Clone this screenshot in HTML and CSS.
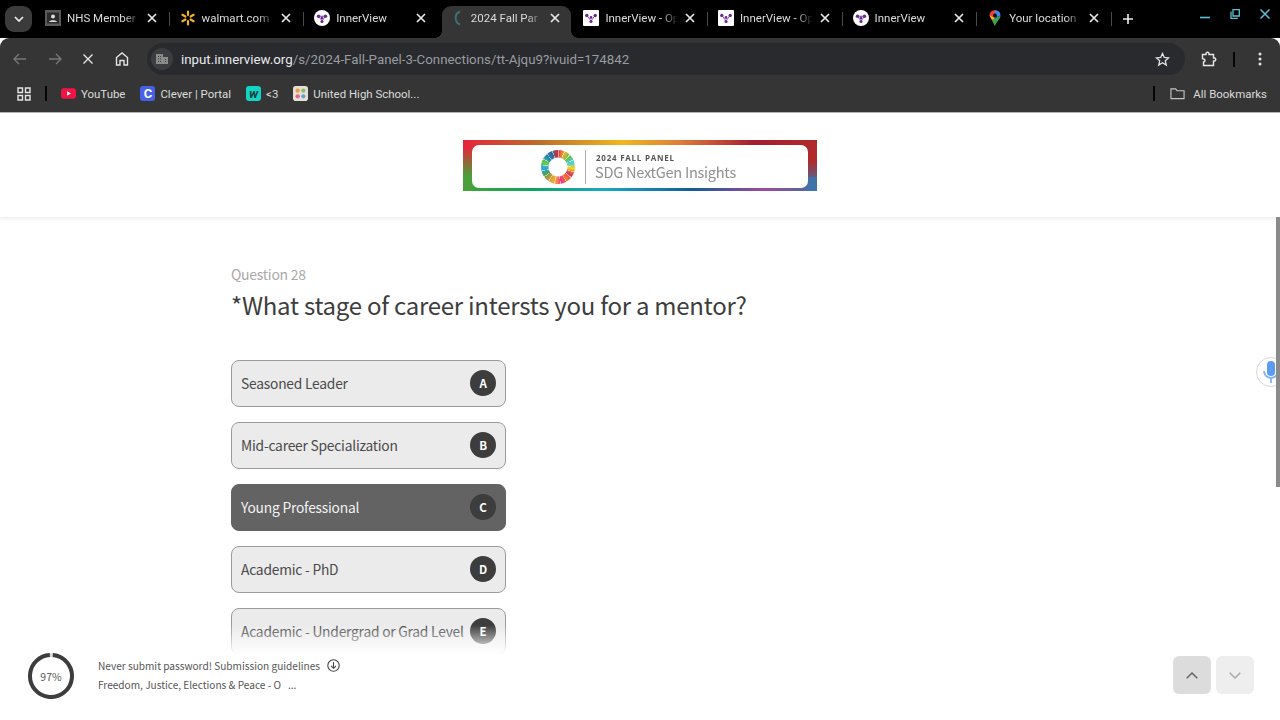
FILE: index.html
```html
<!DOCTYPE html>
<html lang="en">
<head>
<meta charset="utf-8">
<title>2024 Fall Panel</title>
<link rel="stylesheet" href="styles.css">
</head>
<body>
<svg class="defs" width="0" height="0" aria-hidden="true">
  <symbol id="x" viewBox="0 0 10 10"><path d="M1 1l8 8M9 1l-8 8" stroke="#e8e8e8" stroke-width="1.7" fill="none"/></symbol>
  <symbol id="iv-round" viewBox="0 0 16 16"><circle cx="8" cy="8" r="8" fill="#fff"/><path d="M4.5 6.2L8 11M11.500 6.200L8 11M4.500 6.200h7" stroke="#6b2c91" stroke-width=".8" fill="none"/><circle cx="4.500" cy="6.200" r="1.700" fill="#6b2c91"/><circle cx="11.500" cy="6.200" r="1.700" fill="#6b2c91"/><circle cx="8" cy="8" r="1.400" fill="#6b2c91"/><circle cx="8" cy="11.500" r="1.600" fill="#6b2c91"/></symbol>
  <symbol id="iv-square" viewBox="0 0 16 16"><rect width="16" height="16" rx="1" fill="#fff"/><path d="M4.500 6.200L8 11M11.500 6.200L8 11" stroke="#6b2c91" stroke-width=".8" fill="none"/><circle cx="3.800" cy="5.500" r="1.700" fill="#6b2c91"/><circle cx="12.200" cy="5.500" r="1.700" fill="#6b2c91"/><circle cx="8" cy="7.500" r="1.400" fill="#6b2c91"/><circle cx="8" cy="11.500" r="1.600" fill="#6b2c91"/></symbol>
</svg>
<div class="window">
  <div class="tabstrip">
    <button class="group-btn"><svg width="10" height="6" viewBox="0 0 10 6"><path d="M1 1l4 4 4-4" stroke="#eee" stroke-width="1.700" fill="none"/></svg></button>
    <div class="tab sep">
      <svg class="fav" viewBox="0 0 16 16"><rect width="16" height="16" fill="#5a5a5a"/><rect x="2" y="2.500" width="12" height="11" fill="#2c2c2c"/><circle cx="8" cy="6.500" r="2" fill="#ddd"/><path d="M4 12c.5-2.500 7.500-2.500 8 0z" fill="#ddd"/></svg>
      <span class="tab-title">NHS Member</span>
      <svg class="close"><use href="#x"/></svg>
    </div>
    <div class="tab sep">
      <svg class="fav" viewBox="0 0 16 16"><g stroke="#f5b324" stroke-width="2.200" stroke-linecap="round"><path d="M8 1.500v3.500M8 11v3.500M2.400 4.800l3 1.700M10.600 9.500l3 1.700M2.400 11.200l3-1.700M10.600 6.500l3-1.700"/></g></svg>
      <span class="tab-title">walmart.com</span>
      <svg class="close"><use href="#x"/></svg>
    </div>
    <div class="tab">
      <svg class="fav"><use href="#iv-round"/></svg>
      <span class="tab-title">InnerView</span>
      <svg class="close"><use href="#x"/></svg>
    </div>
    <div class="tab active">
      <svg class="fav spinner" viewBox="0 0 16 16"><path d="M11 1.500A7 7 0 0 0 11 14.500" stroke="#3f6f78" stroke-width="2" fill="none"/></svg>
      <span class="tab-title">2024 Fall Par</span>
      <svg class="close"><use href="#x"/></svg>
    </div>
    <div class="tab sep">
      <svg class="fav"><use href="#iv-square"/></svg>
      <span class="tab-title">InnerView - Op</span>
      <svg class="close"><use href="#x"/></svg>
    </div>
    <div class="tab sep">
      <svg class="fav"><use href="#iv-square"/></svg>
      <span class="tab-title">InnerView - Op</span>
      <svg class="close"><use href="#x"/></svg>
    </div>
    <div class="tab sep">
      <svg class="fav"><use href="#iv-round"/></svg>
      <span class="tab-title">InnerView</span>
      <svg class="close"><use href="#x"/></svg>
    </div>
    <div class="tab sep">
      <svg class="fav" viewBox="0 0 16 16"><path d="M8 0a5.500 5.500 0 0 0-5.500 5.500L5 10l3 6z" fill="#ea4335"/><path d="M8 0a5.500 5.500 0 0 1 5.500 5.500L8 8z" fill="#4285f4"/><path d="M2.500 5.500L8 8l-3 2z" fill="#fbbc04"/><path d="M13.500 5.500C13.500 9 9.500 11 8 16l-3-6z" fill="#34a853"/><circle cx="8" cy="5.500" r="2" fill="#111"/></svg>
      <span class="tab-title">Your location</span>
      <svg class="close"><use href="#x"/></svg>
    </div>
    <svg class="plus" width="10" height="10" viewBox="0 0 10 10"><path d="M5 0v10M0 5h10" stroke="#eee" stroke-width="1.600"/></svg>
    <div class="winctl">
      <svg width="10" height="10" viewBox="0 0 10 10"><path d="M0 8.500h10" stroke="#5fc0d4" stroke-width="1.600"/></svg>
      <svg width="10" height="10" viewBox="0 0 10 10"><path d="M3 0.700h6.300v6.300H3zM1 2.500v6.800h6.800" stroke="#5fc0d4" stroke-width="1.300" fill="none"/></svg>
      <svg width="10" height="10" viewBox="0 0 10 10"><path d="M.5.500l9 9M9.500.500l-9 9" stroke="#5fc0d4" stroke-width="1.500"/></svg>
    </div>
  </div>

  <div class="toolbar">
    <div class="nav">
      <svg width="14" height="12" viewBox="0 0 14 12"><path d="M13 6H1.500M6 1L1 6l5 5" stroke="#757779" stroke-width="1.400" fill="none"/></svg>
      <svg width="14" height="12" viewBox="0 0 14 12"><path d="M1 6h11.500M8 1l5 5-5 5" stroke="#757779" stroke-width="1.400" fill="none"/></svg>
      <svg width="12" height="12" viewBox="0 0 12 12"><path d="M1.500 1.500l9 9M10.500 1.500l-9 9" stroke="#e4e4e4" stroke-width="1.400"/></svg>
      <svg width="14" height="14" viewBox="0 0 14 14"><path d="M1.500 13V5.500L7 1l5.500 4.500V13H9V8.500H5V13z" stroke="#e4e4e4" stroke-width="1.400" fill="none"/></svg>
    </div>
    <div class="omnibox">
      <span class="site-chip"><svg width="12" height="12" viewBox="0 0 12 12"><path d="M0 1h7v10H0zM7 4h5v7H7z" fill="#8a8a8a"/><path d="M2 3h1v1H2zM4 3h1v1H4zM2 5.500h1v1H2zM4 5.500h1v1H4zM2 8h1v1H2zM4 8h1v1H4zM9 6h1v1H9zM9 8h1v1H9z" fill="#3c3d3f"/></svg></span>
      <span class="url"><span class="host">input.innerview.org</span>/s/2024-Fall-Panel-3-Connections/tt-Ajqu9?ivuid=174842</span>
      <svg class="star" width="15" height="15" viewBox="0 0 15 15"><path d="M7.500 1.500l1.800 4 4.300.4-3.300 2.900 1 4.300-3.800-2.300-3.800 2.300 1-4.300L1.400 5.900l4.300-.4z" stroke="#e4e4e4" stroke-width="1.300" fill="none"/></svg>
    </div>
    <div class="actions">
      <svg width="16" height="16" viewBox="0 0 16 16"><path d="M1.500 3.500H5V2.800a1.500 1.500 0 0 1 3 0v.7h4.500V7h.8a1.500 1.500 0 0 1 0 3h-.8v4.500H2.500V11a1.500 1.500 0 0 0 0-3 0 0 0 0 1-1-.2z" stroke="#e8e8e8" stroke-width="1.400" fill="none"/></svg>
      <i class="vsep"></i>
      <svg width="4" height="14" viewBox="0 0 4 14"><g fill="#e4e4e4"><circle cx="2" cy="2" r="1.500"/><circle cx="2" cy="7" r="1.500"/><circle cx="2" cy="12" r="1.500"/></g></svg>
    </div>
  </div>

  <div class="bookmarks">
    <svg class="apps" width="14" height="14" viewBox="0 0 14 14"><path d="M1 1h4.500v4.500H1zM8.500 1H13v4.500H8.500zM1 8.500h4.500V13H1zM8.500 8.500H13V13H8.500z" stroke="#e4e4e4" stroke-width="1.400" fill="none"/></svg>
    <i class="vsep"></i>
    <a class="bm bm-yt"><svg class="fav" viewBox="0 0 16 16"><rect y="2.500" width="16" height="11" rx="3" fill="#f01446"/><path d="M6.500 5.500l4 2.500-4 2.500z" fill="#fff"/></svg>YouTube</a>
    <a class="bm bm-clever"><span class="fav-letter clever">C</span>Clever | Portal</a>
    <a class="bm bm-w"><span class="fav-letter watt">w</span>&lt;3</a>
    <a class="bm"><svg class="fav" viewBox="0 0 16 16"><rect width="16" height="16" rx="3" fill="#e6dfd6"/><circle cx="5" cy="5" r="2.300" fill="#e5a13c"/><circle cx="11" cy="5" r="2.300" fill="#8dbb6a"/><circle cx="5" cy="11" r="2.300" fill="#d66a8a"/><circle cx="11" cy="11" r="2.300" fill="#6a9fd6"/></svg>United High School...</a>
    <i class="vsep end"></i>
    <a class="bm all"><svg class="fav" viewBox="0 0 16 16"><path d="M1 3h5l1.500 2H15v8.500H1z" stroke="#c4c4c4" stroke-width="1.200" fill="none"/></svg>All Bookmarks</a>
  </div>

  <div class="page">
    <header class="page-header">
      <div class="banner">
        <div class="banner-inner">
          <span class="sdg-ring"></span>
          <span class="banner-rule"></span>
          <div class="banner-text">
            <span class="banner-kicker">2024 FALL PANEL</span>
            <span class="banner-name">SDG NextGen Insights</span>
          </div>
        </div>
      </div>
    </header>
    <main class="survey">
      <p class="q-num">Question 28</p>
      <h1 class="q-title">*What stage of career intersts you for a mentor?</h1>
      <ul class="answers">
        <li class="answer"><span>Seasoned Leader</span><b class="key">A</b></li>
        <li class="answer"><span>Mid-career Specialization</span><b class="key">B</b></li>
        <li class="answer selected"><span>Young Professional</span><b class="key">C</b></li>
        <li class="answer"><span>Academic - PhD</span><b class="key">D</b></li>
        <li class="answer"><span>Academic - Undergrad or Grad Level</span><b class="key">E</b></li>
      </ul>
    </main>
    <div class="scrollbar"></div>
    <div class="mic">
      <svg width="16" height="24" viewBox="0 0 16 24"><rect x="4" y="1" width="8" height="15" rx="4" fill="#5b9cf0"/><path d="M1 11a7 7 0 0 0 14 0M8 18v5" stroke="#7fb2f3" stroke-width="1.800" fill="none"/></svg>
    </div>
    <footer class="page-footer">
      <div class="progress">
        <svg width="46" height="46" viewBox="0 0 46 46"><circle cx="23" cy="23" r="21" fill="none" stroke="#d9d9d9" stroke-width="4"/><circle cx="23" cy="23" r="21" fill="none" stroke="#3d3d3d" stroke-width="4" stroke-dasharray="128 132" transform="rotate(-85 23 23)"/></svg>
        <span class="pct">97%</span>
      </div>
      <div class="foot-text">
        <p class="foot-line">Never submit password! Submission guidelines
          <svg class="dl" width="13" height="13" viewBox="0 0 13 13"><circle cx="6.500" cy="6.500" r="5.700" stroke="#444" stroke-width="1.100" fill="none"/><path d="M6.500 3v6M4 6.800l2.500 2.500L9 6.800" stroke="#444" stroke-width="1.100" fill="none"/></svg>
        </p>
        <p class="foot-line">Freedom, Justice, Elections &amp; Peace - O <span class="dots">...</span></p>
      </div>
      <div class="pager">
        <button class="pg up"><svg width="12" height="7" viewBox="0 0 12 7"><path d="M.7 6.300L6 1l5.300 5.300" stroke="#666" stroke-width="1.500" fill="none"/></svg></button>
        <button class="pg down"><svg width="12" height="7" viewBox="0 0 12 7"><path d="M.7.700L6 6 11.300.700" stroke="#aaa" stroke-width="1.500" fill="none"/></svg></button>
      </div>
    </footer>
  </div>
</div>
</body>
</html>
```
FILE: styles.css
```css
* { box-sizing: border-box; }
html, body { margin: 0; height: 100%; overflow: hidden; background: #fff; }
p, h1, ul { margin: 0; padding: 0; }
button { border: 0; padding: 0; }
.defs { position: absolute; }
.window { display: flex; flex-direction: column; width: 1280px; height: 720px; font-family: Roboto, sans-serif; }

/* tab strip */
.tabstrip { display: flex; align-items: flex-end; height: 38px; background: #000; padding-left: 5px; flex: none; position: relative; z-index: 1; }
.group-btn { display: flex; align-items: center; justify-content: center; width: 27px; height: 26px; margin: 0 3px 6px 0; border-radius: 9px; background: #3b3b3b; }
.tab { position: relative; display: flex; align-items: center; width: 134.6px; height: 38px; padding: 0 13px 2px 10px; color: #dcdcdc; font-size: 11.500px; flex: none; }
.fav { width: 16px; height: 16px; flex: none; }
.tab .fav { margin-right: 6px; position: relative; z-index: 1; }
.tab-title { flex: 1; overflow: hidden; white-space: nowrap; position: relative; z-index: 1; -webkit-mask-image: linear-gradient(90deg, #000 74%, transparent 96%); mask-image: linear-gradient(90deg, #000 74%, transparent 96%); margin-right: 4px; }
.close { width: 10px; height: 10px; flex: none; position: relative; z-index: 1; }
.tab.sep::after { content: ""; position: absolute; right: 0; top: 12px; height: 14px; width: 1px; background: #4a4a4a; }
.tab.active::before { content: ""; position: absolute; left: 3px; right: 2px; top: 6px; bottom: 0; background: #353535; border-radius: 9px 9px 0 0; }
.tab.active::after { content: ""; position: absolute; left: -4px; right: -5px; bottom: 0; height: 7px; background: radial-gradient(circle at 0 0, #000 6.500px, #353535 7px) left bottom / 7px 7px no-repeat, radial-gradient(circle at 100% 0, #000 6.500px, #353535 7px) right bottom / 7px 7px no-repeat; }
.plus { margin: 0 0 14px 11px; flex: none; }
.winctl { display: flex; gap: 20px; margin: 0 10px 19px auto; }

/* toolbar */
.toolbar { display: flex; align-items: center; height: 37px; background: #353535; border-radius: 9px 9px 0 0; padding: 5px 0 0 0; flex: none; }
.nav { display: flex; align-items: center; justify-content: space-between; width: 116px; margin: 0 18px 0 13px; }
.omnibox { display: flex; align-items: center; width: 1038px; height: 32px; border-radius: 16px; background: #282a2d; padding: 0 15px 0 4px; color: #9a9ca0; font-size: 13.300px; flex: none; }
.site-chip { display: flex; align-items: center; justify-content: center; width: 22px; height: 22px; border-radius: 50%; background: #3c3d3f; margin-right: 8px; }
.url { flex: 1; white-space: nowrap; }
.host { color: #e8eaed; }
.actions { display: flex; align-items: center; margin-left: 16px; }
.actions .vsep { margin: 0 23px 0 16px; }
.vsep { display: block; width: 2px; height: 15px; background: #050505; flex: none; }

/* bookmarks */
.bookmarks { display: flex; align-items: center; height: 38px; background: #353535; border-bottom: 1px solid #b4b4b4; padding-left: 17px; color: #dcdcdc; font-size: 11.450px; flex: none; }
.apps { margin-right: 14px; }
.bm { display: flex; align-items: center; gap: 5px; white-space: nowrap; margin-left: 15px; }
.bm .fav, .fav-letter { width: 15px; height: 15px; }
.bm-yt { margin-left: 14px; }
.fav-letter { display: flex; align-items: center; justify-content: center; border-radius: 3px; font-weight: 700; line-height: 1; }
.clever { background: #4660e6; color: #fff; font-size: 13px; }
.watt { background: #12d6c5; color: #143c3a; font-size: 13px; font-style: italic; }
.vsep.end { margin-left: auto; }
.all { margin: 0 13px 0 15px; gap: 8px; }

/* page */
.page { position: relative; flex: 1; display: flex; flex-direction: column; background: #fff; overflow: hidden; font-family: "Noto Sans CJK SC", "Noto Sans", sans-serif; color: #3d3d3d; }
.page-header { display: flex; justify-content: center; align-items: flex-start; height: 104px; padding-top: 27px; box-shadow: 0 1px 4px rgba(0,0,0,.1); flex: none; position: relative; z-index: 1; }
.banner { display: flex; width: 354px; height: 51px; padding: 5px 9px 3px; background: linear-gradient(90deg, #e5243b 0%, #bc6f2a 22%, #f0b71e 45%, #dd7a3a 62%, #a51c30 82%, #b02a2a 100%); position: relative; overflow: hidden; filter: blur(.35px); }
.banner::after { content: ""; position: absolute; left: 0; right: 0; bottom: 0; height: 14px; background: linear-gradient(90deg, #3fa53a 0%, #0fa35f 20%, #19a8c8 40%, #135c92 65%, #a04a9e 85%, #3f6fa0 100%); }
.banner::before { content: ""; position: absolute; left: 0; top: 0; bottom: 0; width: 100%; z-index: 1; background: linear-gradient(180deg, transparent 15%, #4aa03a 70%) left / 10px 100% no-repeat, linear-gradient(180deg, transparent 40%, #3f74a8 90%) right / 10px 100% no-repeat; }
.banner-inner { position: relative; z-index: 2; display: flex; align-items: center; justify-content: flex-start; width: 100%; padding-left: 69px; background: #fff; border-radius: 7px; color: #8d8d8d; }
.sdg-ring { width: 34px; height: 34px; border-radius: 50%; flex: none; background: radial-gradient(circle, #fff 0 9px, transparent 10px), repeating-conic-gradient(rgba(255,255,255,.55) 0 3deg, transparent 3deg 21.200deg), conic-gradient(#e5243b, #f0b03a, #6cbf48, #46cde8, #fcd30b, #d23962, #fd7925, #ee3387, #fdad34, #cf9b3e, #4f9e54, #2aa7e9, #66d03b, #2088bd, #39688a, #e5243b); }
.banner-rule { width: 1px; height: 34px; background: #aaa; margin: 0 10px; flex: none; }
.banner-text { display: flex; flex-direction: column; font-family: "Open Sans", sans-serif; }
.banner-kicker { font-size: 8px; font-weight: 700; letter-spacing: .75px; color: #555; line-height: 10px; }
.banner-name { font-family: "Noto Sans CJK SC", sans-serif; font-size: 14.600px; line-height: 17px; color: #8f8f8f; letter-spacing: -.28px; margin-left: -1px; }

.survey { flex: 1; width: 818px; margin: 0 auto; padding-top: 46px; overflow: hidden; }
.q-num { font-size: 14px; line-height: 22px; color: #aaa; letter-spacing: -.27px; }
.q-title { font-size: 24px; line-height: 36px; font-weight: 400; color: #3d3d3d; letter-spacing: -.25px; margin: 2px 0 37px; }
.answers { list-style: none; display: flex; flex-direction: column; gap: 15px; width: 275px; }
.answer { display: flex; align-items: center; justify-content: space-between; height: 47px; padding: 0 9px 0 9px; border: 1px solid #9b9b9b; border-radius: 8px; background: #ebebeb; font-size: 13.800px; letter-spacing: -.22px; color: #4a4a4a; white-space: nowrap; }
.answer > span { margin-bottom: 1px; }
.answer.selected { background: #636363; border-color: #636363; color: #f2f2f2; }
.key { display: flex; align-items: center; justify-content: center; width: 26px; height: 26px; margin-bottom: 1px; border-radius: 50%; background: #3d3d3d; color: #fff; font-size: 11.500px; font-weight: 700; flex: none; }

.scrollbar { position: absolute; right: 0; top: 104px; width: 4px; height: 270px; background: #8a8a8a; z-index: 2; }
.mic { position: absolute; left: 1256px; top: 244px; width: 30px; height: 30px; border-radius: 50%; background: #fff; border: 1px solid #d8d8d8; display: flex; align-items: center; justify-content: center; z-index: 1; }
.mic::after { content: ""; position: absolute; left: 20px; top: 8px; width: 4px; height: 6px; background: #f0cc5a; }

.page-footer { position: absolute; left: 0; right: 0; bottom: 0; height: 66px; display: flex; align-items: center; padding: 0 26px 24px 28px; background: #fff; }
.page-footer::before { content: ""; position: absolute; left: 0; right: 4px; top: -34px; height: 35px; background: linear-gradient(180deg, rgba(255,255,255,0) 15%, #fff 100%); }
.progress { position: relative; width: 46px; height: 46px; flex: none; margin-top: 2px; }
.progress svg { display: block; }
.pct { position: absolute; inset: 0; display: flex; align-items: center; justify-content: center; font-size: 10.500px; color: #555; }
.foot-text { margin-left: 24px; display: flex; flex-direction: column; gap: 3px; font-size: 10.100px; color: #555; }
.foot-line { display: flex; align-items: center; gap: 4px; height: 16px; white-space: nowrap; }
.dl { margin-left: 3px; }
.dots { margin-left: 3px; }
.pager { margin-left: auto; display: flex; gap: 5px; }
.pg { display: flex; align-items: center; justify-content: center; width: 38px; height: 38px; border-radius: 6px; }
.up { background: #dcdcdc; }
.down { background: #eeeeee; }
```
